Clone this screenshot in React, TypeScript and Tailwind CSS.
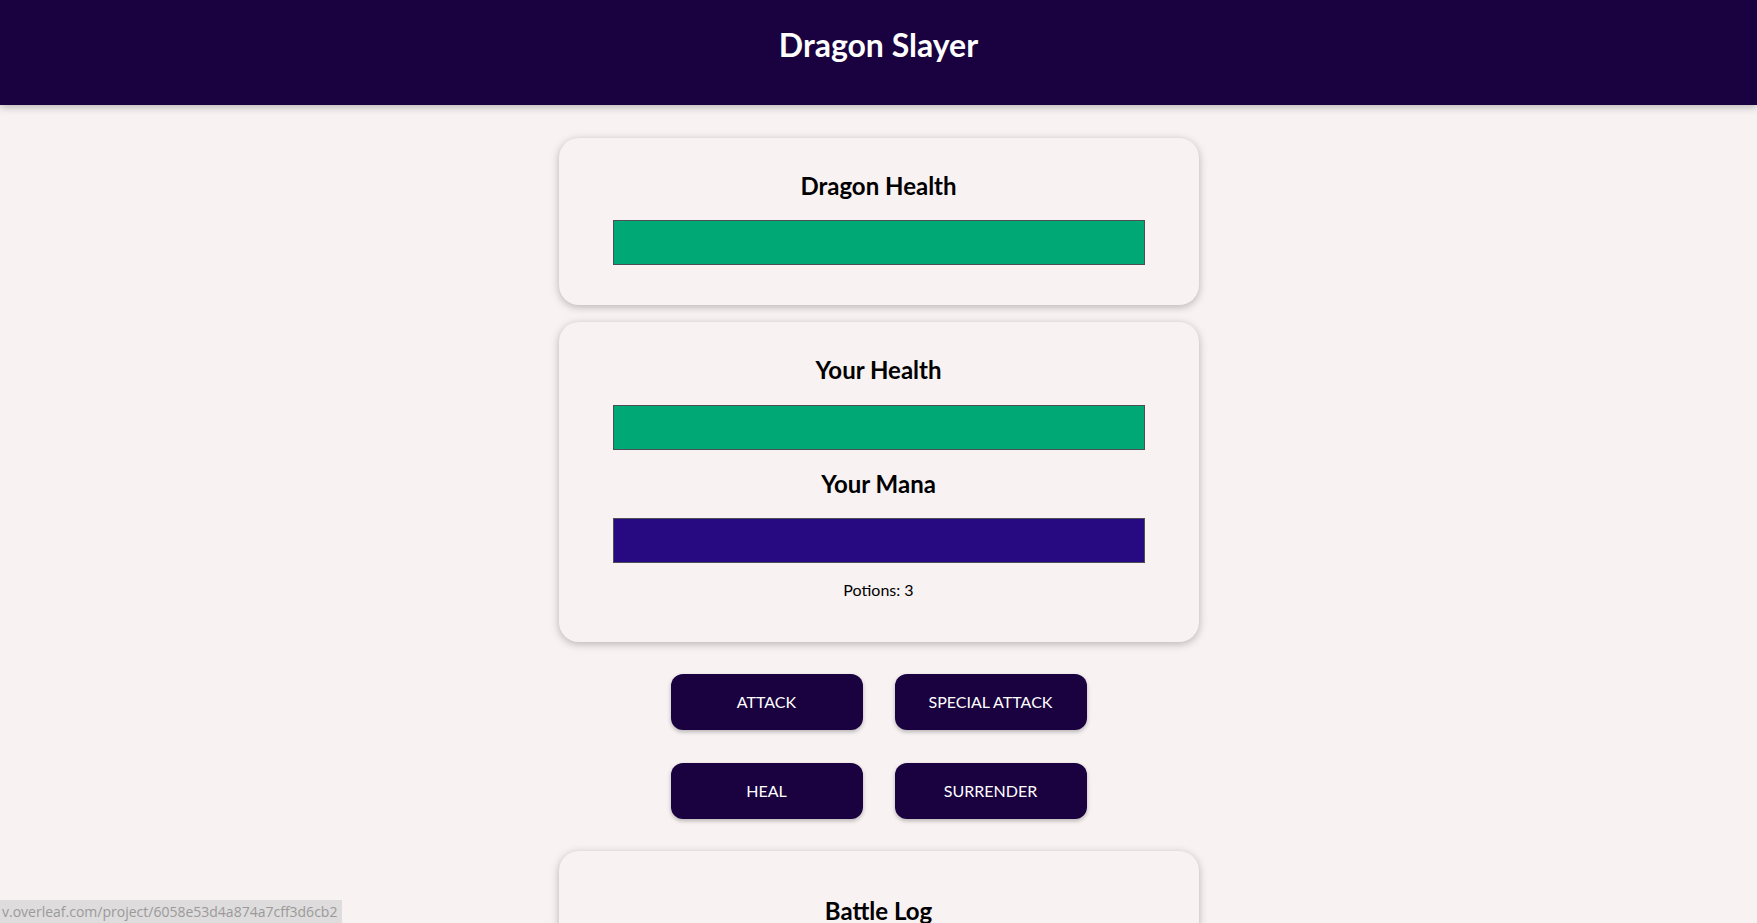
import * as React from "react"

const font = { fontFamily: "Lato, 'Open Sans', sans-serif" }

function Bar({ color }: { color: string }) {
  return <div className={`w-[532px] h-[45px] mx-auto border-[1.5px] border-[#4d4f57] ${color}`} />
}

function Card({ children }: { children: React.ReactNode }) {
  return (
    <section className="w-[640px] mx-auto rounded-[20px] bg-[#f8f2f2] shadow-[0_2px_8px_rgba(0,0,0,0.26)] pt-[32px] pb-[40px] text-center">
      {children}
    </section>
  )
}

function GameButton({ label }: { label: string }) {
  return (
    <button className="w-[192px] h-[56px] rounded-[12px] bg-[#1a0240] text-white text-[16px] uppercase shadow-[0_2px_4px_rgba(0,0,0,0.26)]">
      {label}
    </button>
  )
}

export default function App() {
  return (
    <div className="min-h-[1100px] bg-[#f8f2f2] text-black" style={font}>
      <header className="h-[105px] bg-[#1a0240] pt-[25px] shadow-[0_2px_8px_rgba(0,0,0,0.26)]">
        <h1 className="text-center text-white text-[32px] leading-[40px] font-bold">Dragon Slayer</h1>
      </header>

      <main className="pt-[33px] flex flex-col gap-[17px]">
        <Card>
          <h2 className="text-[24px] leading-[32px] font-bold mb-[18px]">Dragon Health</h2>
          <Bar color="bg-[#00a876]" />
        </Card>

        <Card>
          <h2 className="text-[24px] leading-[32px] font-bold mb-[19px]">Your Health</h2>
          <Bar color="bg-[#00a876]" />
          <h2 className="text-[24px] leading-[32px] font-bold mt-[18px] mb-[18px]">Your Mana</h2>
          <Bar color="bg-[#270a82]" />
          <p className="mt-[15px] text-[16px] leading-[24px]">Potions: 3</p>
        </Card>

        <div className="flex flex-col items-center gap-[33px] py-[15px]">
          <div className="flex gap-[32px]">
            <GameButton label="Attack" />
            <GameButton label="Special Attack" />
          </div>
          <div className="flex gap-[32px]">
            <GameButton label="Heal" />
            <GameButton label="Surrender" />
          </div>
        </div>

        <Card>
          <h2 className="pt-[12px] text-[24px] leading-[32px] font-bold">Battle Log</h2>
          <div className="h-[120px]" />
        </Card>
      </main>

      <div className="fixed left-0 bottom-0 h-[23px] pl-[2px] pr-[5px] bg-[#dedcdc] text-[#9a9a9a] text-[14px] leading-[23px]" style={{ fontFamily: "'Open Sans', sans-serif" }}>
        v.overleaf.com/project/6058e53d4a874a7cff3d6cb2
      </div>
    </div>
  )
}
